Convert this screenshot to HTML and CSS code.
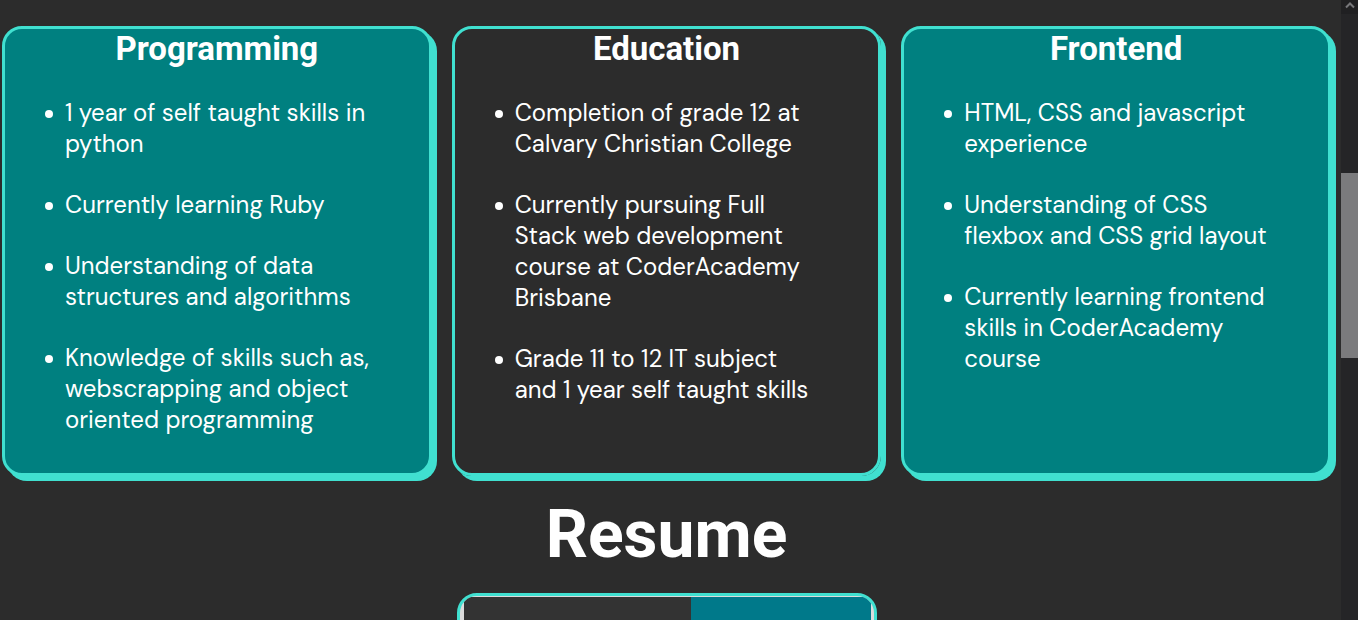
FILE: index.html
```html
<!DOCTYPE html>
<html lang="en">
<head>
<meta charset="utf-8">
<title>Skills and Resume</title>
<link rel="stylesheet" href="styles.css">
</head>
<body>
<div class="viewport">
  <main class="page">
    <section class="cards">
      <article class="card card-teal">
        <h2 class="card-title">Programming</h2>
        <ul class="card-list">
          <li>1 year of self taught skills in python</li>
          <li>Currently learning Ruby</li>
          <li>Understanding of data structures and algorithms</li>
          <li>Knowledge of skills such as, webscrapping and object oriented programming</li>
        </ul>
      </article>
      <article class="card">
        <h2 class="card-title">Education</h2>
        <ul class="card-list">
          <li>Completion of grade 12 at Calvary Christian College</li>
          <li>Currently pursuing Full Stack web development course at CoderAcademy Brisbane</li>
          <li>Grade 11 to 12 IT subject and 1 year self taught skills</li>
        </ul>
      </article>
      <article class="card card-teal">
        <h2 class="card-title">Frontend</h2>
        <ul class="card-list">
          <li>HTML, CSS and javascript experience</li>
          <li>Understanding of CSS flexbox and CSS grid layout</li>
          <li>Currently learning frontend skills in CoderAcademy course</li>
        </ul>
      </article>
    </section>
    <h1 class="resume-title">Resume</h1>
    <div class="resume">
      <div class="resume-main"></div>
      <div class="resume-side"></div>
    </div>
  </main>
  <div class="scrollbar" aria-hidden="true">
    <div class="scroll-up">
      <svg width="10" height="10" viewBox="0 0 10 10"><path d="M1 7.5 L5 3.5 L9 7.5" fill="none" stroke="#77777a" stroke-width="2"/></svg>
    </div>
    <div class="scroll-thumb"></div>
  </div>
</div>
</body>
</html>
```
FILE: styles.css
```css
* {
  box-sizing: border-box;
}

body {
  margin: 0;
  background: #2c2c2c;
  color: #fff;
  font-family: "DM Sans", Inter, sans-serif;
}

.viewport {
  display: flex;
  height: 100vh;
  overflow: hidden;
}

.page {
  flex: 1;
  padding: 26px 10px 0 2px;
}

.cards {
  display: grid;
  grid-template-columns: repeat(3, 1fr);
  gap: 20px;
}

.card {
  min-height: 450px;
  border: 3px solid #40e0d0;
  border-radius: 20px;
  box-shadow: 5px 5px #40e0d0;
}

.card-teal {
  background: #008080;
}

.card-title {
  margin: 0;
  font: 700 33px/40px Roboto, sans-serif;
  text-align: center;
}

.card-list {
  display: grid;
  gap: 30px;
  margin: 0;
  padding: 28px 56px 38px 60px;
  font-size: 24px;
  line-height: 31px;
  list-style: none;
}

.card-list li {
  position: relative;
}

.card-list li::before {
  content: "";
  position: absolute;
  top: 13px;
  left: -20px;
  width: 8px;
  height: 8px;
  border-radius: 50%;
  background: #fff;
}

.resume-title {
  margin: 20px 0;
  font: 700 66px/77px Roboto, sans-serif;
  text-align: center;
}

.resume {
  display: flex;
  width: 420px;
  height: 560px;
  margin: 0 auto;
  padding: 1px 3px 0 4px;
  overflow: hidden;
  border: 3px solid #40e0d0;
  border-radius: 20px;
  background: #dcdcdc;
}

.resume-main {
  flex: 227;
  background: #333;
}

.resume-side {
  flex: 180;
  background: #00798a;
}

.scrollbar {
  width: 17px;
  background: #252527;
}

.scroll-up {
  display: flex;
  justify-content: center;
  height: 14px;
  background: #202022;
}

.scroll-thumb {
  height: 185px;
  margin-top: 159px;
  background: #7b7b7d;
}
```
